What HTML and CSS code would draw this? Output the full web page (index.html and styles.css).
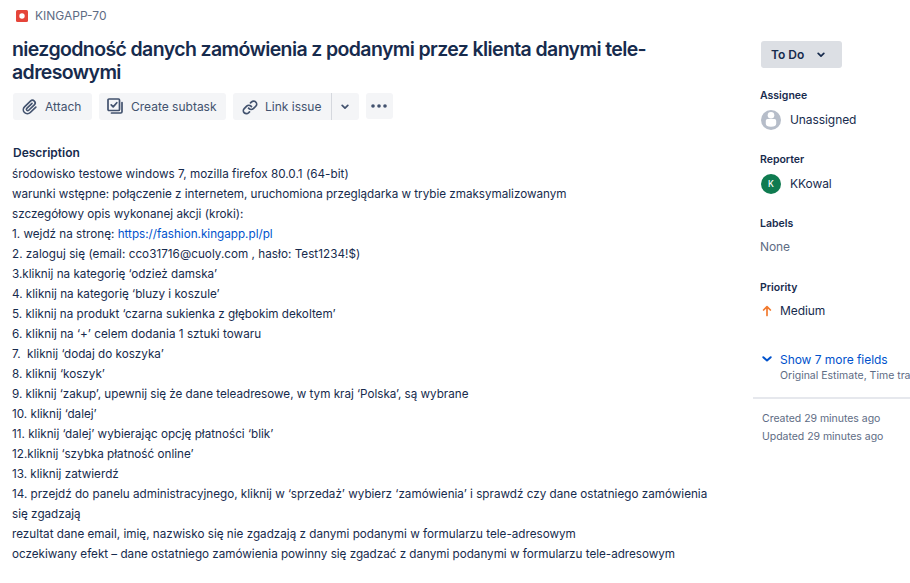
FILE: index.html
```html
<!DOCTYPE html>
<html lang="pl">
<head>
<meta charset="utf-8">
<title>KINGAPP-70</title>
<link rel="stylesheet" href="styles.css">
</head>
<body>
<div class="page">
  <main class="issue">
    <div class="crumb">
      <svg class="bug" viewBox="0 0 12 12"><rect width="12" height="12" rx="1.5" fill="#e5453a"/><circle cx="6" cy="6" r="2.7" fill="#fff"/></svg>
      <span>KINGAPP-70</span>
    </div>
    <h1>niezgodność danych zamówienia z podanymi przez klienta danymi tele-<br>adresowymi</h1>
    <div class="toolbar">
      <button class="btn attach"><svg viewBox="0 0 24 24"><path fill="currentColor" d="M11.643 17.965c-1.53 1.495-4.016 1.496-5.542.004a3.773 3.773 0 01.002-5.412l7.147-6.985a2.316 2.316 0 013.233-.003c.893.873.895 2.282.004 3.153l-6.703 6.55a.653.653 0 01-.914-.008.62.62 0 010-.902l6.229-6.087a.941.941 0 000-1.353.995.995 0 00-1.384 0l-6.23 6.087a2.502 2.502 0 000 3.607 2.643 2.643 0 003.683.009l6.703-6.55a4.074 4.074 0 00-.003-5.859 4.306 4.306 0 00-6.002.003l-7.148 6.985a5.655 5.655 0 00-.001 8.118c2.29 2.24 6.015 2.239 8.31-.005l6.686-6.533a.941.941 0 000-1.353.995.995 0 00-1.384 0l-6.686 6.534z"/></svg><span>Attach</span></button>
      <button class="btn subtask"><svg viewBox="0 0 20 20" fill="none" stroke="currentColor" stroke-width="1.7" stroke-linejoin="round"><rect x="2" y="2" width="11.500" height="11.500" rx="1"/><path d="M5.200 7.800l2 2.100 3.600-4.200" stroke-linecap="round"/><path d="M16 5.500v9.200q0 1.300-1.300 1.300H5.500" stroke-linecap="round"/></svg><span>Create subtask</span></button>
      <div class="split">
        <button class="btn link"><svg viewBox="0 0 24 24"><path fill="currentColor" d="M12.856 5.457l-.937.92a1.002 1.002 0 000 1.437 1.047 1.047 0 001.463 0l.984-.966c.967-.95 2.542-1.135 3.602-.288a2.54 2.54 0 01.203 3.81l-2.903 2.852a2.646 2.646 0 01-3.696 0l-1.11-1.09L9 13.570l1.108 1.089c1.822 1.788 4.802 1.788 6.622 0l2.905-2.852a4.558 4.558 0 00-.357-6.820c-1.893-1.517-4.695-1.226-6.422.47M11.144 19.543l.937-.92a1.002 1.002 0 000-1.437 1.047 1.047 0 00-1.462 0l-.985.966c-.967.95-2.542 1.135-3.602.288a2.54 2.54 0 01-.203-3.810l2.903-2.852a2.646 2.646 0 013.696 0l1.110 1.090L15 11.430l-1.108-1.089c-1.822-1.788-4.802-1.788-6.622 0l-2.905 2.852a4.558 4.558 0 00.357 6.820c1.893 1.517 4.695 1.226 6.422-.47"/></svg><span>Link issue</span></button>
        <button class="btn drop"><svg class="chev" viewBox="0 0 8 6"><path d="M1.200 1.400L4 4.200l2.800-2.800"/></svg></button>
      </div>
      <button class="btn more"><svg class="dots" viewBox="0 0 16 4"><circle cx="2" cy="2" r="1.800"/><circle cx="8" cy="2" r="1.800"/><circle cx="14" cy="2" r="1.800"/></svg></button>
    </div>
    <h2>Description</h2>
    <div class="description">
      <p class="wide">środowisko testowe windows 7, mozilla firefox 80.0.1 (64-bit)</p>
      <p class="tight">warunki wstępne: połączenie z internetem, uruchomiona przeglądarka w trybie zmaksymalizowanym</p>
      <p>szczegółowy opis wykonanej akcji (kroki):</p>
      <p>1. wejdź na stronę: <a>https://fashion.kingapp.pl/pl</a></p>
      <p class="wide">2. zaloguj się (email: cco31716@cuoly.com , hasło: Test1234!$)</p>
      <p>3.kliknij na kategorię ‘odzież damska’</p>
      <p>4. kliknij na kategorię ‘bluzy i koszule’</p>
      <p>5. kliknij na produkt ‘czarna sukienka z głębokim dekoltem’</p>
      <p class="wide">6. kliknij na ‘+’ celem dodania 1 sztuki towaru</p>
      <p>7.&nbsp; kliknij ‘dodaj do koszyka’</p>
      <p>8. kliknij ‘koszyk’</p>
      <p class="tight">9. kliknij ‘zakup’, upewnij się że dane teleadresowe, w tym kraj ‘Polska’, są wybrane</p>
      <p>10. kliknij ‘dalej’</p>
      <p>11. kliknij ‘dalej’ wybierając opcję płatności ‘blik’</p>
      <p>12.kliknij ‘szybka płatność online’</p>
      <p>13. kliknij zatwierdź</p>
      <p>14. przejdź do panelu administracyjnego, kliknij w ‘sprzedaż’ wybierz ‘zamówienia’ i sprawdź czy dane ostatniego zamówienia<br>się zgadzają</p>
      <p>rezultat dane email, imię, nazwisko się nie zgadzają z danymi podanymi w formularzu tele-adresowym</p>
      <p class="tight">oczekiwany efekt – dane ostatniego zamówienia powinny się zgadzać z danymi podanymi w formularzu tele-adresowym</p>
    </div>
  </main>
  <aside class="side">
    <button class="status"><span>To Do</span><svg class="chev" viewBox="0 0 8 6"><path d="M1.200 1.400L4 4.200l2.800-2.800"/></svg></button>
    <section class="field">
      <h3>Assignee</h3>
      <div class="value"><svg class="avatar" viewBox="0 0 20 20"><circle cx="10" cy="10" r="10" fill="#b6bdc9"/><circle cx="10" cy="5.300" r="3.300" fill="#fff"/><path d="M4.800 10.700q0-1.700 1.700-1.700h7q1.700 0 1.700 1.700v2.800q0 3.300-5.200 3.300t-5.200-3.300z" fill="#fff"/></svg><span>Unassigned</span></div>
    </section>
    <section class="field">
      <h3>Reporter</h3>
      <div class="value"><span class="avatar initial">K</span><span>KKowal</span></div>
    </section>
    <section class="field">
      <h3>Labels</h3>
      <div class="value none">None</div>
    </section>
    <section class="field">
      <h3>Priority</h3>
      <div class="value priority"><svg viewBox="0 0 10 12"><path d="M5 10.500V2M1.600 5L5 1.600 8.400 5"/></svg><span>Medium</span></div>
    </section>
    <div class="show-more">
      <svg viewBox="0 0 10 6"><path d="M1.300 1.200L5 4.500l3.700-3.300"/></svg>
      <div><div class="show-title">Show 7 more fields</div><div class="show-sub">Original Estimate, Time tracking</div></div>
    </div>
    <div class="dates"><div>Created 29 minutes ago</div><div>Updated 29 minutes ago</div></div>
  </aside>
</div>
</body>
</html>
```
FILE: styles.css
```css
* { box-sizing: border-box; }
body { margin: 0; background: #fff; color: #172b4d; font: 12px/20px Inter, "Open Sans", sans-serif; overflow: hidden; }
h1, h2, h3, p { margin: 0; }
button { border: 0; padding: 0; font: inherit; color: inherit; }
.page { display: flex; width: 910px; height: 583px; overflow: hidden; }
.issue { width: 753px; flex: none; padding: 6px 0 0 12px; white-space: nowrap; }
.crumb { display: flex; align-items: center; gap: 7px; height: 20px; padding-left: 4px; color: #5e6c84; }
.bug { width: 12px; height: 12px; }
h1 { margin-top: 12px; font-size: 19.500px; line-height: 23px; font-weight: 600; letter-spacing: -0.615px; }
.toolbar { display: flex; margin: 9px 0 0 1px; height: 27px; color: #42526e; letter-spacing: -0.050px; }
.btn { display: flex; align-items: center; height: 27px; background: #f4f5f7; border-radius: 3px; }
.btn > svg:not(.chev):not(.dots) { width: 20px; height: 20px; }
.attach { width: 79px; padding-left: 7px; gap: 5px; margin-right: 7px; }
.subtask { width: 127px; padding-left: 7px; gap: 5px; margin-right: 7px; }
.split { display: flex; margin-right: 7px; }
.link { width: 98px; padding-left: 7px; gap: 5px; border-radius: 3px 0 0 3px; }
.drop { width: 28px; height: 27px; padding-right: 1px; justify-content: center; border-left: 1px solid #d5d8de; border-radius: 0 3px 3px 0; }
.more { width: 27px; height: 26px; padding-right: 1px; justify-content: center; }
.chev { width: 8px; height: 6px; fill: none; stroke: currentColor; stroke-width: 1.700; stroke-linecap: round; stroke-linejoin: round; }
.dots { width: 16px; height: 4px; fill: currentColor; }
h2 { margin: 23px 0 0 1px; font-size: 12px; line-height: 20px; font-weight: 600; }
.description { margin-top: 1px; font-size: 11.700px; }
.wide { letter-spacing: 0.030px; }
.tight { letter-spacing: -0.020px; }
a { color: #0052cc; }
.side { flex: 1; min-width: 0; overflow: hidden; padding-top: 41px; white-space: nowrap; }
.status { display: flex; align-items: center; gap: 13px; width: 81px; height: 27px; margin: 0 0 18px 8px; padding-left: 10px; background: #dcdfe4; border-radius: 3px; font-weight: 600; }
.field { height: 64px; padding-left: 7px; }
h3 { font-size: 10.500px; line-height: 20px; font-weight: 600; }
.value { display: flex; align-items: center; height: 20px; margin-top: 4px; padding-left: 1px; gap: 9px; letter-spacing: -0.080px; }
.avatar { width: 20px; height: 20px; flex: none; }
.initial { border-radius: 50%; background: #0f7b50; color: #fff; font-size: 8.500px; font-weight: 500; text-align: center; }
.none { color: #5e6c84; padding-left: 0; margin-top: 3px; }
.priority { margin-top: 3px; padding-left: 2px; gap: 8px; }
.priority svg { width: 10px; height: 12px; fill: none; stroke: #f27a2e; stroke-width: 1.700; stroke-linecap: round; stroke-linejoin: round; }
.show-more { display: flex; gap: 8px; padding: 8px 0 0 9px; height: 55px; }
.show-more svg { flex: none; width: 10px; height: 6px; margin-top: 6px; fill: none; stroke: #0052cc; stroke-width: 2; stroke-linecap: round; stroke-linejoin: round; }
.show-title { color: #0052cc; letter-spacing: -0.050px; }
.show-sub { color: #5e6c84; font-size: 10.500px; line-height: 12px; }
.dates { border-top: 2px solid #e6e8ed; padding: 11px 0 0 9px; color: #5e6c84; font-size: 10.500px; line-height: 18px; letter-spacing: -0.030px; }
```
